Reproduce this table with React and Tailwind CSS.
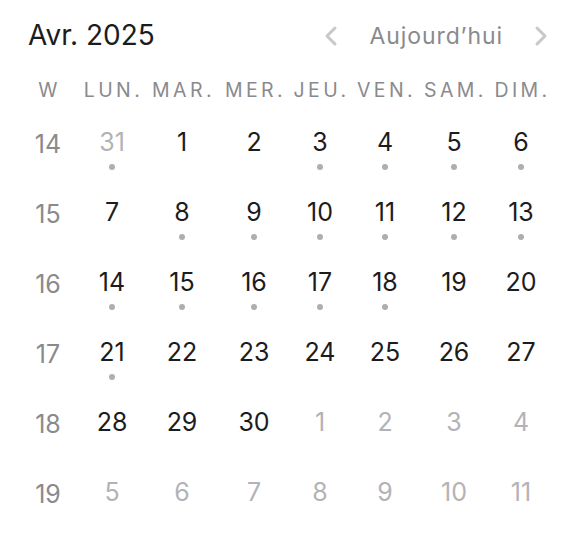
import React from "react";

const weeks = [
  { w: 14, days: [[31, 0, 1], [1, 1, 0], [2, 1, 0], [3, 1, 1], [4, 1, 1], [5, 1, 1], [6, 1, 1]] },
  { w: 15, days: [[7, 1, 0], [8, 1, 1], [9, 1, 1], [10, 1, 1], [11, 1, 1], [12, 1, 1], [13, 1, 1]] },
  { w: 16, days: [[14, 1, 1], [15, 1, 1], [16, 1, 1], [17, 1, 1], [18, 1, 1], [19, 1, 0], [20, 1, 0]] },
  { w: 17, days: [[21, 1, 1], [22, 1, 0], [23, 1, 0], [24, 1, 0], [25, 1, 0], [26, 1, 0], [27, 1, 0]] },
  { w: 18, days: [[28, 1, 0], [29, 1, 0], [30, 1, 0], [1, 0, 0], [2, 0, 0], [3, 0, 0], [4, 0, 0]] },
  { w: 19, days: [[5, 0, 0], [6, 0, 0], [7, 0, 0], [8, 0, 0], [9, 0, 0], [10, 0, 0], [11, 0, 0]] },
];

const labels = ["W", "LUN.", "MAR.", "MER.", "JEU.", "VEN.", "SAM.", "DIM."];

function Chevron({ dir }) {
  return (
    <svg width="16" height="22" viewBox="0 0 16 22" fill="none">
      <polyline
        points={dir === "left" ? "12,3 4,11 12,19" : "4,3 12,11 4,19"}
        stroke="#c7c7cc"
        strokeWidth="3"
        strokeLinecap="round"
        strokeLinejoin="round"
      />
    </svg>
  );
}

export default function App() {
  return (
    <div className="w-[576px] h-[536px] overflow-hidden bg-white font-['Inter',sans-serif]">
      <div className="flex items-center justify-between h-[70px] pl-[28px] pr-[27px]">
        <div className="text-[28px] leading-none text-[#1c1c1e] tracking-[0px]">Avr. 2025</div>
        <div className="flex items-center pt-[2px]">
          <Chevron dir="left" />
          <div className="ml-[31px] mr-[30px] text-[23px] leading-none text-[#8a8a8e] tracking-[0.9px]">Aujourd’hui</div>
          <Chevron dir="right" />
        </div>
      </div>
      <div className="ml-[16px] grid grid-cols-[64px_64px_76px_68px_64px_66px_72px_62px]">
        {labels.map((l) => (
          <div
            key={l}
            className="h-[50px] flex items-start pt-[10px] justify-center text-[19.5px] leading-[20px] tracking-[3.4px] text-[#8a8a8e] pl-[3px]"
          >
            {l}
          </div>
        ))}
        {weeks.map((wk) => (
          <React.Fragment key={wk.w}>
            <div className="h-[70px] pt-[9px] text-center text-[25px] leading-[30px] text-[#8a8a8e]">{wk.w}</div>
            {wk.days.map(([d, cur, dot], i) => (
              <div key={i} className="h-[70px] pt-[7px] flex flex-col items-center">
                <div className={`text-[25px] leading-[30px] ${cur ? "text-[#1c1c1e]" : "text-[#b3b3b7]"}`}>{d}</div>
                {dot ? <div className="mt-[7px] w-[6px] h-[6px] rounded-full bg-[#aeaeb2]" /> : null}
              </div>
            ))}
          </React.Fragment>
        ))}
      </div>
    </div>
  );
}
